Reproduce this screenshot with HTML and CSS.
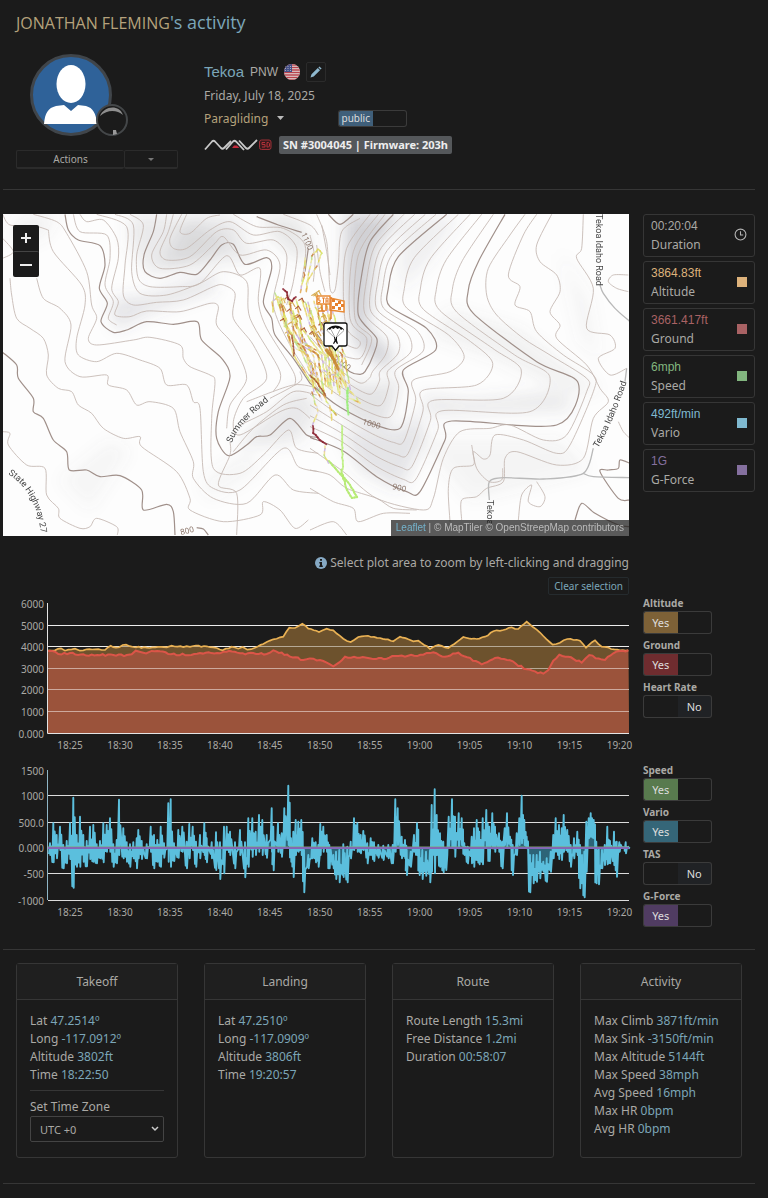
FILE: index.html
```
<!DOCTYPE html>
<html lang="en">
<head>
  <meta charset="UTF-8" />
  <meta name="viewport" content="width=device-width, initial-scale=1.0" />
  <title>Activity</title>
  <link rel="stylesheet" href="styles.css">
</head>
<body>
  <h1 class="page-title"><a href="#">JONATHAN FLEMING</a>'s activity</h1>

  <div class="profile">
    <div class="profile-left">
      <div class="avatar">
        <svg viewBox="0 0 82 82" aria-hidden="true">
          <circle cx="41" cy="41" r="39.5" fill="#2f6299" stroke="#40454a" stroke-width="3" />
          <ellipse cx="41" cy="30" rx="14.5" ry="19" fill="#fff" />
          <path d="M14 70c1-11 4-16 12-18l8-1 7 6 7-6 8 1c7 2 10 7 11 18z" fill="#fff" />
        </svg>
        <svg class="avatar-badge" viewBox="0 0 32 32" aria-hidden="true">
          <circle cx="16" cy="16" r="15" fill="#1b1b1b" stroke="#444749" stroke-width="2" />
          <path d="M4 12C8 2 23 0 27 11c-6-5-15-6-23 1z" fill="#8e8e8e" />
          <path d="M17 26l3 0 1 4-4 1z" fill="#999" />
        </svg>
      </div>
      <div class="actions">
        <button type="button" class="actions-main">Actions</button>
        <button type="button" class="actions-more" aria-label="More actions"><span class="caret"></span></button>
      </div>
    </div>

    <div class="profile-info">
      <div class="site-row">
        <a href="#" class="site-name">Tekoa</a>
        <span class="site-region">PNW</span>
        <svg class="flag" viewBox="0 0 16 16" aria-label="United States">
          <clipPath id="round"><circle cx="8" cy="8" r="8" /></clipPath>
          <g clip-path="url(#round)">
            <path fill="#e4dcdc" d="M0 0h16v16H0z" />
            <path stroke="#b8434c" stroke-width="1.3" d="M0 1h16M0 3.5h16M0 6h16M0 8.5h16M0 11h16M0 13.5h16M0 16h16" />
            <path fill="#434f86" d="M0 0h8v8H0z" />
            <path stroke="#aab" stroke-width="1" stroke-dasharray="1 1.5" d="M1 2.5h7M1 4.5h7M1 6.5h7" />
          </g>
        </svg>
        <button type="button" class="edit-btn" aria-label="Edit site">
          <svg viewBox="0 0 12 12" aria-hidden="true"><path d="M.5 11.5l1-3.2 6.3-6.3 2.2 2.2-6.3 6.3zM8.400 1.400l1-1 2.200 2.200-1 1z" fill="#8fb9cf" /></svg>
        </button>
      </div>
      <div class="date-row">Friday, July 18, 2025</div>
      <div class="sport-row">
        <select class="sport" aria-label="Sport"><option>Paragliding</option></select>
        <label class="switch switch-public">
          <input type="checkbox" aria-label="Visibility" checked>
          <span>public</span><span></span>
        </label>
      </div>
      <div class="device-row">
        <svg class="device-logo" viewBox="0 0 68 12" aria-label="NAV SD">
          <path d="M1 10.500 8 2.500q1.500-1.500 3 0l6 6.500q1.500 1.500 3 0L27 2M22 10.500l7-8q1.500-1.500 3 0l8 8.500M35 1.500l7 7.500q1.500 1.500 3 0l8-8" fill="none" stroke="#c9c9c9" stroke-width="1.800" />
          <path d="M28 9l2-2.500h3L35.500 9z" fill="#c22a3c" />
          <rect x="55.500" y="1" width="11.500" height="9.500" rx="2" fill="#3a1a1c" stroke="#9c3037" />
          <path d="M61 3.500h-3v2h3v2.500h-3M63 3.500h1.500l1 1v2.500l-1 1H63z" fill="none" stroke="#b33038" />
        </svg>
        <span class="serial">SN #3004045 | Firmware: 203h</span>
      </div>
    </div>
  </div>

  <hr>

  <div class="flight">
    <div class="map">
      <svg id="map" viewBox="3 214 626 322" role="img" aria-label="Flight map">
        <defs>
          <filter id="soft" x="-30%" y="-30%" width="160%" height="160%"><feGaussianBlur stdDeviation="8" /></filter>
        </defs>
        <rect x="3" y="214" width="626" height="322" fill="#fdfdfd" />
        <g id="relief" filter="url(#soft)"></g>
        <g id="contoursWest" transform="translate(0 205) scale(.33333)"></g>
        <g id="contoursEast" transform="translate(310 205) scale(.33333)"></g>
        <g class="elevations">
          <text transform="translate(301 234) rotate(66)">1100</text>
          <text transform="translate(334 359) rotate(40)">1100</text>
          <text transform="translate(362 424) rotate(16)">1000</text>
          <text transform="translate(392 489) rotate(12)">900</text>
          <text transform="translate(181 535) rotate(-14)">800</text>
        </g>
        <path id="roadSummer" d="M232 443Q238 424 270 400" fill="none" />
        <path id="roadHighway" d="M8 474Q36 491 41 534" fill="none" />
        <path id="roadTekoa" d="M598 448Q612 425 627 381" fill="none" />
        <g class="roads">
          <text><textPath href="#roadSummer">Summer Road</textPath></text>
          <text><textPath href="#roadHighway">State Highway 27</textPath></text>
          <text><textPath href="#roadTekoa">Tekoa Idaho Road</textPath></text>
          <text transform="translate(596 214) rotate(90)">Tekoa Idaho Road</text>
          <text transform="translate(487 500) rotate(90)">Tekoa</text>
        </g>
        <g id="track"></g>
        <g class="marks">
          <path d="M317 296h13v8h-13zM330 298l14 3v11l-14-2z" fill="#fff" stroke="#e98a35" stroke-width="1.500" />
          <path d="M331 297v22M318 311h7M322 305v6M326 304v7" stroke="#e67f2b" stroke-width="1.500" />
          <path d="M320 298h-2v2h2v2.500h-2M322 298h3M323.500 298v5M326 303v-5h2v5M326 301h2" fill="none" stroke="#e67f2b" />
          <path d="M332 299h3v3h-3zM338 301h3v3h-3zM335 303h3v3h-3zM332 306h3v3h-3zM338 307h3v3h-3zM341 304h3v3h-3z" fill="#e67f2b" />
          <path d="M326 323h19q2 0 2 2v19q0 2-2 2h-6l-3.500 4.500L332 346h-6q-2 0-2-2v-19q0-2 2-2z" fill="#fff" stroke="#111" stroke-width="1.300" />
          <path d="M326.500 331q1.500-5 9-5.500 7.500 .5 9 5.500l-2-2-1.500 1-1.500-2-2 1-2-1.500-2 1.500-2-1-1.500 2-1.500-1z" fill="#111" />
          <path d="M327 330.500l8 7.500M331 329.500l4 8M340 329.500l-4 8M344 330.500l-8 7.500" stroke="#555" stroke-width=".5" />
          <path d="M334 337h1v1.500h1V337h1v3.500l1 3-1 .5-1.500-2.500L334 344l-1-.5 1.500-3z" fill="#111" />
        </g>
      </svg>
      <div class="map-zoom">
        <button type="button" aria-label="Zoom in"><svg viewBox="0 0 12 12"><path d="M6 1v10M1 6h10" /></svg></button>
        <button type="button" aria-label="Zoom out"><svg viewBox="0 0 12 12"><path d="M0 6h12" /></svg></button>
      </div>
      <div class="map-credit"><a href="#">Leaflet</a> | © MapTiler © OpenStreepMap contributors</div>
    </div>

    <div class="readouts">
      <div class="readout duration">
        <div><b>00:20:04</b><span>Duration</span></div>
        <svg viewBox="0 0 12 12" aria-hidden="true"><circle cx="6" cy="6" r="5" /><path d="M6 3v3.500h2.500" /></svg>
      </div>
      <div class="readout altitude"><div><b>3864.83ft</b><span>Altitude</span></div><i></i></div>
      <div class="readout ground"><div><b>3661.417ft</b><span>Ground</span></div><i></i></div>
      <div class="readout speed"><div><b>6mph</b><span>Speed</span></div><i></i></div>
      <div class="readout vario"><div><b>492ft/min</b><span>Vario</span></div><i></i></div>
      <div class="readout gforce"><div><b>1G</b><span>G-Force</span></div><i></i></div>
    </div>

    <div class="plot-hint">
      <p>
        <svg viewBox="0 0 12 12" aria-hidden="true"><circle cx="6" cy="6" r="6" fill="#86a9c4" /><path d="M5 2h2v1.800H5zM4.300 5H7v3.500h.8V10H4.300V8.500H5V6.400h-.7z" fill="#1b1b1b" /></svg>
        Select plot area to zoom by left-clicking and dragging
      </p>
      <button type="button" class="clear-btn">Clear selection</button>
    </div>

    <svg id="heightChart" class="chart" viewBox="3 595 626 162" role="img" aria-label="Altitude and ground"></svg>
    <div class="switches">
      <label class="switch altitude">Altitude<input type="checkbox" checked><span>Yes</span><span></span></label>
      <label class="switch ground">Ground<input type="checkbox" checked><span>Yes</span><span></span></label>
      <label class="switch">Heart Rate<input type="checkbox"><span></span><span>No</span></label>
    </div>

    <svg id="varioChart" class="chart" viewBox="3 762 626 162" role="img" aria-label="Speed and vario"></svg>
    <div class="switches">
      <label class="switch speed">Speed<input type="checkbox" checked><span>Yes</span><span></span></label>
      <label class="switch vario">Vario<input type="checkbox" checked><span>Yes</span><span></span></label>
      <label class="switch">TAS<input type="checkbox"><span></span><span>No</span></label>
      <label class="switch gforce">G-Force<input type="checkbox" checked><span>Yes</span><span></span></label>
    </div>
  </div>

  <hr>

  <div class="cards">
    <div class="card">
      <h2>Takeoff</h2>
      <div class="card-body">
        <ul>
          <li>Lat <b>47.2514º</b></li>
          <li>Long <b>-117.0912º</b></li>
          <li>Altitude <b>3802ft</b></li>
          <li>Time <b>18:22:50</b></li>
        </ul>
        <div class="timezone">
          <label for="timezone">Set Time Zone</label>
          <select id="timezone"><option>UTC +0</option></select>
        </div>
      </div>
    </div>
    <div class="card">
      <h2>Landing</h2>
      <div class="card-body">
        <ul>
          <li>Lat <b>47.2510º</b></li>
          <li>Long <b>-117.0909º</b></li>
          <li>Altitude <b>3806ft</b></li>
          <li>Time <b>19:20:57</b></li>
        </ul>
      </div>
    </div>
    <div class="card">
      <h2>Route</h2>
      <div class="card-body">
        <ul>
          <li>Route Length <b>15.3mi</b></li>
          <li>Free Distance <b>1.2mi</b></li>
          <li>Duration <b>00:58:07</b></li>
        </ul>
      </div>
    </div>
    <div class="card">
      <h2>Activity</h2>
      <div class="card-body">
        <ul>
          <li>Max Climb <b>3871ft/min</b></li>
          <li>Max Sink <b>-3150ft/min</b></li>
          <li>Max Altitude <b>5144ft</b></li>
          <li>Max Speed <b>38mph</b></li>
          <li>Avg Speed <b>16mph</b></li>
          <li>Max HR <b>0bpm</b></li>
          <li>Avg HR <b>0bpm</b></li>
        </ul>
      </div>
    </div>
  </div>

  <hr>

  <script src="script.js"></script>
</body>
</html>
```
FILE: styles.css
```
* {
  box-sizing: border-box;
}

body {
  margin: 0;
  padding: 9px 13px 14px 3px;
  background: #1b1b1b;
  color: #aaa9a5;
  font-family: "Noto Sans", sans-serif;
  font-size: 12px;
  line-height: 18px;
}

a {
  color: #7ba6b8;
  text-decoration: none;
}

button, select {
  font-family: inherit;
  font-size: 10px;
  color: inherit;
  background: transparent;
  border: 1px solid #2b2b2b;
  border-radius: 2px;
  padding: 0;
  cursor: pointer;
}

hr {
  margin: 0;
  border: 0;
  border-top: 1px solid #363636;
}

.page-title {
  margin: 0 13px 18px;
  font-family: "Open Sans", sans-serif;
  font-size: 18px;
  font-weight: 400;
  line-height: 26px;
  color: #7ba6b8;
}

.page-title a {
  font-size: 16px;
  color: #b5a27c;
}

/* profile header */
.profile {
  display: grid;
  grid-template-columns: 162px 1fr;
  gap: 26px;
  padding: 0 13px;
  margin-bottom: 20px;
}

.avatar {
  position: relative;
  width: 82px;
  height: 82px;
  margin: 0 14px 14px;
}

.avatar svg {
  display: block;
  width: 100%;
}

.avatar .avatar-badge {
  position: absolute;
  right: -16px;
  bottom: 0;
  width: 32px;
}

.actions {
  display: flex;
  height: 19px;
}

.actions button {
  border-bottom: 2px solid #2b2b2b;
}

.actions .actions-main {
  flex: 1;
  border-right: 0;
}

.actions .actions-more {
  display: flex;
  align-items: center;
  justify-content: center;
  width: 54px;
  color: #777;
}

.caret {
  border: 3px solid transparent;
  border-top-color: currentColor;
  border-bottom: 0;
}

.profile-info {
  padding-top: 8px;
}

.profile-info > div {
  display: flex;
  align-items: center;
}

.site-row {
  gap: 6px;
  height: 20px;
  font-family: "Liberation Sans", sans-serif;
}

.site-name {
  font-size: 15px;
}

.flag {
  width: 16px;
  height: 16px;
}

.edit-btn {
  display: flex;
  align-items: center;
  justify-content: center;
  width: 20px;
  height: 20px;
}

.edit-btn svg {
  width: 12px;
}

.date-row {
  margin-top: 5px;
}

.sport-row {
  gap: 50px;
  margin-top: 4px;
}

.sport {
  appearance: none;
  width: 84px;
  height: 18px;
  border: 0;
  font-size: 12px;
  color: #b5a27c;
  background: url('data:image/svg+xml,<svg xmlns="http://www.w3.org/2000/svg" width="7" height="4"><path d="M0 0h7L3.500 4z" fill="%23bbb"/></svg>') no-repeat right 4px center;
}

.device-row {
  gap: 7px;
  margin-top: 9px;
}

.device-logo {
  width: 68px;
  height: 12px;
}

.serial {
  padding: 0 4px;
  border-radius: 2px;
  background: #55585b;
  color: #eee;
  font-size: 11px;
  font-weight: 700;
}

/* yes / no switches */
.switches {
  display: flex;
  flex-direction: column;
  gap: 3px;
}

.switch {
  position: relative;
  display: grid;
  grid-template-columns: repeat(2, minmax(0, 1fr));
  grid-template-rows: 16px 23px;
  width: 69px;
  font-size: 10px;
  font-weight: 700;
  line-height: 16px;
  white-space: nowrap;
  cursor: pointer;
}

.switch input {
  position: absolute;
  opacity: 0;
}

.switch span {
  grid-row: 2;
  height: 23px;
  border: 1px solid #3b3b3b;
  font-size: 11px;
  font-weight: 400;
  line-height: 21px;
  text-align: center;
  color: #ddd;
}

.switch span:nth-of-type(1) {
  border-right: 0;
  border-radius: 3px 0 0 3px;
}

.switch span:nth-of-type(2) {
  border-left: 0;
  border-radius: 0 3px 3px 0;
}

.switch input:not(:checked) ~ span:nth-of-type(2) {
  background: #202225;
}

.switch.altitude input:checked + span { background: #7d6137; }
.switch.ground input:checked + span { background: #6f2c2f; }
.switch.speed input:checked + span { background: #587a4e; }
.switch.vario input:checked + span { background: #356678; }
.switch.gforce input:checked + span { background: #503c62; }
.switch-public input:checked + span { background: #3f5f7a; }

.switch-public {
  grid-template-rows: 17px;
}

.switch-public span {
  grid-row: 1;
  height: 17px;
  font-size: 10px;
  line-height: 15px;
}

/* map, readouts and charts */
.flight {
  display: grid;
  grid-template-columns: 1fr 112px;
  column-gap: 14px;
  padding: 24px 0 22px;
}

.map {
  position: relative;
  overflow: hidden;
}

.map > svg {
  display: block;
  width: 100%;
}

.elevations {
  font-size: 8px;
  fill: #8a7468;
}

.roads {
  font-family: Roboto, sans-serif;
  font-size: 9px;
  fill: #444;
}

.map-zoom {
  position: absolute;
  top: 11px;
  left: 10px;
  width: 26px;
  border-radius: 2px;
  background: #1b1b1b;
}

.map-zoom button {
  display: flex;
  align-items: center;
  justify-content: center;
  width: 26px;
  height: 26px;
  border: 0;
}

.map-zoom button + button {
  border-top: 1px solid #444;
}

.map-zoom svg {
  width: 12px;
  stroke: #eee;
  stroke-width: 2;
}

.map-credit {
  position: absolute;
  right: 0;
  bottom: 0;
  padding: 0 5px;
  background: rgba(27, 27, 27, 0.72);
  color: #bbb;
  font-family: "Liberation Sans", sans-serif;
  font-size: 10px;
  line-height: 16px;
}

.map-credit a {
  color: #74b3cc;
}

.readouts {
  display: flex;
  flex-direction: column;
  gap: 4px;
}

.readout {
  display: flex;
  align-items: center;
  justify-content: space-between;
  height: 43px;
  padding: 0 7px 2px;
  border: 1px solid #363636;
  border-radius: 3px;
}

.readout b {
  display: block;
  font-family: "Liberation Sans", sans-serif;
  font-weight: 400;
  line-height: 20px;
}

.readout i {
  width: 10px;
  height: 10px;
  background: currentColor;
}

.readout svg {
  width: 13px;
  fill: none;
  stroke: #b5b5b5;
}

.readout span {
  color: #aaa9a5;
}

.readout.altitude { color: #ddb27b; }
.readout.ground { color: #a96264; }
.readout.speed { color: #82b67f; }
.readout.vario { color: #7fb9d0; }
.readout.gforce { color: #85709f; }

.plot-hint {
  grid-column: 1;
  display: flex;
  flex-direction: column;
  align-items: flex-end;
  gap: 5px;
  padding-top: 18px;
}

.plot-hint p {
  display: flex;
  align-items: center;
  gap: 3px;
  margin: 0;
}

.plot-hint svg {
  width: 12px;
}

.clear-btn {
  height: 18px;
  padding: 0 5px;
  color: #7ba6b8;
  border-color: #252b2e;
}

.chart {
  grid-column: 1;
  display: block;
  width: 100%;
  overflow: visible;
  margin-bottom: 5px;
}

.chart + .switches + .chart {
  margin-bottom: 0;
}

.chart text {
  font-size: 10px;
  fill: #aaa9a5;
}

/* summary cards */
.cards {
  display: grid;
  grid-template-columns: repeat(4, 1fr);
  gap: 26px;
  padding: 13px 13px 25px;
}

.card {
  min-height: 195px;
  border: 1px solid #363636;
  border-radius: 3px;
}

.card h2 {
  margin: 0;
  font-size: 12px;
  font-weight: 400;
  line-height: 35px;
  text-align: center;
  background: #1f1f1f;
  border-bottom: 1px solid #363636;
}

.card-body {
  padding: 12px 13px 15px;
}

.card ul {
  margin: 0;
  padding: 0;
  list-style: none;
}

.card b {
  font-weight: 400;
  color: #7ba6b8;
}

.timezone {
  display: flex;
  flex-direction: column;
  margin-top: 6px;
  padding-top: 7px;
  border-top: 1px solid #363636;
}

.timezone select {
  appearance: none;
  height: 26px;
  padding: 0 9px;
  border-color: #444;
  font-size: 11px;
  background: url('data:image/svg+xml,<svg xmlns="http://www.w3.org/2000/svg" width="8" height="6"><path d="M1 1l3 3 3-3" fill="none" stroke="%23ccc" stroke-width="1.500"/></svg>') no-repeat right 4px center;
}
```
FILE: script.js
```
const SVG = 'http://www.w3.org/2000/svg';

function add(parent, name, attrs, text) {
  const el = document.createElementNS(SVG, name);
  for (const key in attrs) el.setAttribute(key, attrs[key]);
  if (text) el.textContent = text;
  parent.appendChild(el);
  return el;
}

function parse(str) {
  return str.trim().split(/\s+/).map(p => p.split(',').map(Number));
}

// same noise on every load
let seed = 7;
function rand() {
  seed = (seed * 16807) % 2147483647;
  return seed / 2147483647;
}

// Catmull-Rom through the points
function smooth(pts) {
  let d = `M${pts[0]}`;
  for (let i = 0; i < pts.length - 1; i++) {
    const a = pts[i - 1] || pts[i], b = pts[i], c = pts[i + 1], e = pts[i + 2] || c;
    d += `C${b[0] + (c[0] - a[0]) / 7},${b[1] + (c[1] - a[1]) / 7} ${c[0] - (e[0] - b[0]) / 7},${c[1] - (e[1] - b[1]) / 7} ${c}`;
  }
  return d;
}

function between(a, b, t) {
  return a.map((p, i) => [p[0] + (b[i][0] - p[0]) * t, p[1] + (b[i][1] - p[1]) * t]);
}

/* ---------- map ---------- */
const relief = document.getElementById('relief');
// polygon, opacity
[
  ['130,214 170,214 260,250 250,262 190,262 150,275 130,245', 0.12],
  ['110,300 150,295 215,272 215,290 150,312 115,330', 0.15],
  ['190,214 230,214 250,235 225,245 200,265 160,268', 0.12],
  ['260,214 300,216 312,250 300,262 270,235', 0.14],
  ['345,214 400,214 375,250 368,330 395,355 385,370 355,345 345,290', 0.28],
  ['335,380 380,385 400,375 395,400 385,430 350,420', 0.16],
  ['340,430 400,430 420,410 425,440 400,490 360,470', 0.15],
  ['420,395 470,400 560,392 575,410 500,412 430,415', 0.13],
  ['235,445 300,385 320,410 300,440 270,445', 0.13],
  ['450,310 520,330 600,390 570,395 500,360 430,335', 0.08],
  ['400,216 460,216 430,260 400,290 400,250', 0.09],
  ['5,240 20,216 60,214 40,240', 0.08],
  ['60,480 110,440 130,450 90,510', 0.05],
  ['560,250 590,300 600,360 580,340', 0.05],
  ['420,440 560,440 590,470 470,500', 0.06],
  ['200,480 250,450 260,470 210,500', 0.05]
].forEach(([points, opacity]) => add(relief, 'polygon', { points, fill: '#60606c', opacity }));

function contour(group, pts, kind) {
  const style = {
    index: ['#a0908a', 3.6],
    thin: ['#c4b7b1', 2.6],
    road: ['#b9b9b9', 4]
  }[kind];
  add(group, 'path', { d: smooth(pts), fill: 'none', stroke: style[0], 'stroke-width': style[1] });
}

const west = document.getElementById('contoursWest');
[
  '195,28 205,75 235,105 300,122 315,180 298,250 322,295 303,350 340,382 380,375 440,350 520,358 592,350 605,405 665,460 690,515 655,620 650,700 685,752 740,720 770,695 810,690 870,640 920,690 955,697',
  '470,28 460,80 432,150 435,200 480,220 540,202 590,208 630,165 665,120 700,118 735,178 800,158 815,190 790,290 815,340 825,390 880,460 930,535',
  '770,35 835,60 905,82',
  '925,130 915,200',
  '8,442 50,480 55,520 100,580 100,620 130,640 160,705 200,740 208,795 260,795 300,815 360,812 425,855 430,915 500,898 520,920 525,990',
  '590,968 610,972 625,990'
].forEach(p => contour(west, parse(p), 'index'));
[
  '8,28 30,60 100,62 145,75', '8,100 40,140 8,160',
  '30,220 35,270 50,340 90,370 130,400 145,450 140,510 175,550 215,560 235,600 275,625 310,670 370,700 420,695 425,725 530,800 570,880 570,915 670,950 780,930 790,890 840,915 885,970 925,945',
  '110,220 130,280 180,310 213,360 195,470 240,515 320,510 325,540 380,555 410,600 450,590 520,610 540,680 580,770 580,820 640,880 740,895 825,810 880,855 955,865',
  '145,75 160,140 245,240 255,300 230,400 235,450 290,470 350,445 420,465 480,490 500,540 560,540 580,590 600,610 610,800 640,850 720,855 850,730 895,785 955,800',
  '100,28 170,50 200,85 260,200 275,300 290,340 265,400 290,420 400,405 450,397 540,420 550,460 570,485 630,510 645,530 635,640 640,790 720,805 790,750 865,675 890,730 955,745',
  '240,28 260,50 310,45 350,100 355,160 335,250 355,290 345,330 390,335 440,318 540,320 630,295 655,305 650,360 700,420 740,520 690,600 680,670',
  '220,28 240,80 320,90 330,160 315,240 340,290 325,340 350,360',
  '290,28 380,65 375,180 370,270 400,300 470,292 550,285 640,245 670,240 705,265 700,340 760,420 800,520 730,580 700,650 720,690 840,620 890,610 930,640',
  '345,28 400,60 395,200 420,265 500,270 600,235 670,200 740,230 750,340 840,500 820,560',
  '390,28 430,60 410,150 415,220 450,245 540,245 600,235 680,152 720,210 780,190 775,290 800,370 880,500 885,540',
  '500,28 490,80 455,150 480,190 570,180 640,120 670,95 720,150 800,135 840,180 820,300 870,420 960,560',
  '520,28 505,80 480,140 500,165 570,155 650,80 700,75 740,115 820,105 860,150 850,240',
  '545,28 510,100 520,130 560,130 630,75 690,50 760,90 840,80 890,130 880,230 860,300',
  '560,28 540,80 570,85 620,40 660,30', '700,28 770,65 850,70 915,120 905,230', '850,28 930,60 955,90',
  '700,740 760,670 850,600 920,580', '720,660 800,620 880,560 950,570', '740,590 880,540 955,550',
  '8,680 30,685 25,720 80,780 135,790 140,870 175,910 180,940 240,970 270,965 290,940 350,965 352,990'
].forEach(p => contour(west, parse(p), 'thin'));
['810,580 900,530 900,500', '690,710 690,750 655,840 710,865 710,990'].forEach(p => contour(west, parse(p), 'thin'));

const east = document.getElementById('contoursEast');
const ridge = parse('250,28 180,110 155,210 145,330 200,400 190,450 165,500 150,508 120,500 60,450 30,400 0,360');
const slope = parse('410,28 265,155 235,250 240,305 350,370 377,435 280,495 295,560 270,670 185,655 80,600 0,535');
const slopeOuter = parse('410,28 265,155 235,250 240,305 350,370 377,435 340,460 280,495 295,560 270,670 240,675 185,655 80,600 0,535');
const shelf = parse('585,28 505,170 475,255 490,325 680,470 805,535 740,660 425,648 405,705 330,860 290,860 200,815 100,738 0,697');
[ridge, slope, shelf].forEach(p => contour(east, p, 'index'));
[0.2, 0.4, 0.6, 0.8].forEach(t => {
  contour(east, between(ridge, slope, t), 'thin');
  contour(east, between(slopeOuter, shelf, t), 'thin');
});
[
  '55,28 90,58 130,28',
  '960,885 925,880 870,800 895,795 925,790 930,765 960,775',
  '795,945 815,895 855,925 925,960 960,965'
].forEach(p => contour(east, parse(p), 'index'));
[
  '150,40 95,80 85,180 75,255 60,250 50,110 20,28',
  '180,28 110,130 100,260 110,370 150,410 140,430 110,420',
  '205,28 130,140 120,340 170,400 150,460 90,450',
  '225,28 145,150 135,340 185,400 155,480',
  '20,120 30,200 45,260', '0,90 15,160 10,230', '35,60 50,140 60,210',
  '645,28 600,90 535,190 530,270 560,330 640,400 720,450 830,520 830,560 770,690 700,705 600,660 540,670 450,680 400,760 370,880 340,915 200,880 100,800 0,730',
  '680,28 640,90 595,210 630,245 615,300 660,320 680,380 760,450 850,510 850,560 780,720 740,745 640,705 555,690 540,750 520,762 490,740 490,780 430,790 415,850 420,950',
  '725,28 680,120 690,170 740,210 750,260 720,320 750,360 740,400 830,480 870,550 895,590 850,640 820,760 740,780 620,740 585,760 580,830 530,850 500,875 455,885 455,945',
  '820,28 815,130 800,160 850,250 830,370 900,390 915,430 865,460 900,510 950,490',
  '625,945 635,870 665,840 655,890 690,905 705,875 680,830',
  '955,260 920,250 895,230 910,210 955,210', '925,650 940,680 960,700',
  '0,795 60,810 110,850 200,880 250,910 320,915', '0,850 70,890 130,910 145,950 220,925 300,925', '0,975 70,950 110,990'
].forEach(p => contour(east, parse(p), 'thin'));
[
  '870,240 880,265 915,310 960,350',
  '538,885 538,830 580,818 700,822 820,805 850,730',
  '950,490 945,530', '820,805 850,815 960,818'
].forEach(p => contour(east, parse(p), 'road'));
contour(east, parse('485,720 500,790 538,830 575,825 578,790'), 'thin');

const track = document.getElementById('track');
const palette = ['#e6e06a', '#ded655', '#e9e695', '#b9e08a', '#c9b0e0', '#e0a84e', '#ecd98a', '#c77b3c', '#d4e870', '#ead36a', '#e3dff0', '#eee9a8'];
function strand(pts, color, width) {
  for (let i = 0; i < pts.length - 1; i++) {
    const [x1, y1] = pts[i], [x2, y2] = pts[i + 1];
    const steps = Math.max(1, Math.round(Math.hypot(x2 - x1, y2 - y1) / 3));
    let x = x1, y = y1;
    for (let s = 1; s <= steps; s++) {
      const nx = x1 + (x2 - x1) * s / steps + rand() - 0.5;
      const ny = y1 + (y2 - y1) * s / steps + rand() - 0.5;
      add(track, 'path', {
        d: `M${x},${y}L${nx},${ny}`, 'stroke-width': width || 1.5, 'stroke-linecap': 'round', opacity: 0.85,
        stroke: color || palette[Math.floor(rand() * palette.length)]
      });
      x = nx;
      y = ny;
    }
  }
}
for (let i = 0; i < 20; i++) {
  const top = 275 + i * 3, start = 293 + rand() * 22;
  const end = 312 + i * 2;
  strand([[top, start], [top + 4 + rand() * 6, start + 30], [end - 12 + rand() * 10, 355], [end, 370 + rand() * 25]]);
}
for (let i = 0; i < 26; i++) {
  const x = 280 + rand() * 44, y = 292 + rand() * 46;
  strand([[x, y], [x + 3, y - 2], [x + 5, y + 2]], i % 3 ? '#d2a340' : '#a8522c', 1.2);
}
[
  '306,290 309,272 312,256 318,249 322,253 317,266 308,280 306,292',
  '305,258 304,278 300,292', '273,312 272,302 278,297 285,300', '280,298 293,355 310,380 322,400',
  '322,370 340,378 360,403 350,398', '315,378 328,404 336,415 330,408 332,420', '312,392 318,412 312,425',
  '325,446 324,455 329,463', '290,300 294,330 310,360 314,392', '320,322 330,350 345,385'
].forEach(p => strand(parse(p)));
strand(parse('283,289 287,292 288,299 292,301 296,297'), '#8b2330', 1.8);
strand(parse('313,426 313,433 320,440 326,444'), '#8b2330', 1.8);
strand(parse('292,335 294,356'), '#a85a30');
strand(parse('327,350 334,360 338,368'), '#c88b35', 3);
strand(parse('310,375 318,384 326,396'), '#a85a30');
strand(parse('348,388 347,402 348,415'), '#9bee7a', 2);
strand(parse('342,426 342,445 343,470'), '#bdef80', 1.8);
strand(parse('329,461 340,474 350,485 357,497 352,498 347,490 341,470'), '#b4ea70', 2);

/* ---------- charts ---------- */
function axes(chart, rows, labels, labelY) {
  rows.forEach((y, i) => {
    add(chart, 'text', { x: 44, y: y + 4, 'text-anchor': 'end' }, labels[i]);
    if (i) add(chart, 'path', { d: `M48,${y}H629`, stroke: '#dcdcdc', 'shape-rendering': 'crispEdges' });
  });
  for (let i = 0; i < 12; i++) {
    const m = 25 + i * 5;
    const time = `${18 + Math.floor(m / 60)}:${String(m % 60).padStart(2, '0')}`;
    add(chart, 'text', { x: 70 + i * 50 - i / 20, y: labelY, 'text-anchor': 'middle' }, time);
  }
}

// extra small wobble between the recorded points
function wobble(pts, amount) {
  const out = [];
  pts.forEach((p, i) => {
    out.push(p);
    const q = pts[i + 1];
    if (!q) return;
    const n = Math.floor((q[0] - p[0]) / 8);
    for (let k = 1; k < n; k++) {
      out.push([p[0] + (q[0] - p[0]) * k / n, p[1] + (q[1] - p[1]) * k / n + (rand() - 0.5) * amount]);
    }
  });
  return out;
}

function toPlot(pts, top) {
  return pts.map(p => [+(p[0] / 3).toFixed(1), +(top + p[1] / 3).toFixed(1)]);
}

const heights = document.getElementById('heightChart');
const heightRows = [603.5, 625.5, 646.5, 668.5, 689.5, 711.5, 733.5];
const altitude = toPlot(wobble(parse('145,331 165,331 183,325 195,332 225,326 240,332 260,328 285,328 315,330 332,317 348,323 378,314 400,321 440,323 500,322 515,317 550,321 580,318 620,319 650,324 668,331 695,320 715,326 728,321 742,329 765,323 790,312 820,298 850,290 868,263 885,264 907,251 925,266 957,276 980,266 1000,271 1030,296 1052,306 1075,291 1095,288 1140,294 1180,304 1200,290 1225,298 1240,304 1255,302 1290,327 1315,315 1345,324 1390,291 1430,297 1455,290 1480,274 1510,270 1535,262 1555,267 1580,245 1600,262 1630,288 1658,314 1680,308 1702,297 1740,302 1758,323 1785,301 1805,320 1852,329 1885,331'), 4), 540);
const ground = toPlot(wobble(parse('145,333 165,335 175,342 210,339 250,343 300,346 380,345 395,343 407,332 430,338 480,334 530,346 600,339 660,340 680,335 720,340 800,342 820,331 870,350 910,360 940,356 970,363 1000,379 1035,350 1080,353 1160,356 1185,348 1215,350 1270,344 1300,337 1335,350 1375,338 1445,373 1485,354 1530,361 1580,388 1630,401 1645,390 1660,362 1678,344 1705,350 1745,368 1768,345 1815,360 1840,340 1860,333 1885,331'), 7), 540);
axes(heights, heightRows, ['6000', '5000', '4000', '3000', '2000', '1000', '0.000'], 749);
add(heights, 'path', { d: `M48,733L${altitude.join('L')}L629,733Z`, fill: '#6d522d' });
add(heights, 'path', { d: `M48,733L${ground.join('L')}L629,733Z`, fill: '#9b533b' });
heightRows.slice(1).forEach(y => add(heights, 'path', { d: `M48,${y}H629`, stroke: '#fff', opacity: 0.5, 'shape-rendering': 'crispEdges' }));
add(heights, 'path', { d: `M${altitude.join('L')}`, fill: 'none', stroke: '#e9b154', 'stroke-width': 1.7 });
add(heights, 'path', { d: `M${ground.join('L')}`, fill: 'none', stroke: '#db5548', 'stroke-width': 2 });
add(heights, 'path', { d: 'M47.5,603V733.5H629', fill: 'none', stroke: '#e4e4e4' });

const vario = document.getElementById('varioChart');
axes(vario, [770.5, 795.5, 822.5, 847.5, 873.5, 900.5], ['1500', '1000', '500.0', '0.000', '-500', '-1000'], 916);
// x,high,low
const swings = parse('150,265,300 160,205,322 170,240,310 180,215,285 190,270,340 200,258,325 210,205,312 220,128,398 230,240,335 240,185,335 250,240,320 260,258,334 270,215,312 280,210,320 290,268,325 300,258,310 310,205,322 320,210,290 330,190,290 340,268,335 350,255,325 357,134,300 370,220,310 380,262,320 390,268,335 400,262,310 410,250,340 415,225,310 425,258,312 440,268,310 452,215,290 462,240,340 472,255,320 482,215,335 492,265,308 505,145,320 512,133,335 522,265,318 535,225,308 547,215,290 560,260,340 568,207,310 578,215,285 588,260,335 600,240,310 613,205,300 620,250,322 635,262,310 648,232,345 660,262,372 672,215,355 680,215,285 690,230,300 705,262,340 720,225,300 735,262,367 745,190,335 757,190,305 767,230,300 777,180,290 787,195,300 800,240,308 815,160,290 820,215,346 834,205,290 845,235,305 853,160,275 865,92,270 873,250,320 880,230,366 887,195,300 895,200,290 904,195,300 912,285,412 925,300,340 937,250,310 947,262,322 955,270,335 961,207,300 970,215,290 980,240,290 988,270,340 1000,300,340 1008,290,372 1018,285,382 1030,268,366 1042,275,382 1052,260,310 1062,190,285 1072,205,290 1082,240,295 1090,228,285 1102,265,325 1112,250,300 1122,262,318 1135,270,308 1150,272,315 1165,270,310 1178,270,325 1186,133,290 1193,160,270 1205,245,310 1215,255,310 1220,285,360 1232,290,335 1242,240,290 1251,205,300 1258,280,360 1267,285,372 1278,290,362 1290,285,382 1295,150,350 1304,103,355 1310,180,300 1320,235,335 1330,260,352 1338,280,345 1346,185,275 1356,133,275 1365,185,305 1376,175,280 1385,190,270 1393,265,300 1403,275,325 1415,245,325 1422,220,335 1430,195,315 1438,230,328 1448,190,328 1459,165,275 1468,215,318 1477,175,280 1485,215,290 1497,235,290 1507,260,340 1514,220,270 1521,175,275 1530,245,270 1538,270,360 1550,235,300 1558,190,270 1565,122,265 1573,195,270 1580,245,280 1590,300,412 1600,300,385 1610,300,380 1620,290,370 1630,320,350 1640,310,380 1652,290,350 1660,240,310 1667,190,290 1677,210,312 1685,220,315 1691,180,290 1702,225,290 1712,270,335 1722,250,310 1732,230,300 1740,270,400 1746,300,385 1753,290,427 1759,200,350 1766,190,250 1772,175,245 1781,195,250 1789,260,385 1796,280,388 1806,285,340 1814,270,330 1822,215,328 1830,258,325 1842,230,330 1850,260,365 1858,262,290 1870,277,279 1877,262,295 1885,275,280');
const line = [];
swings.forEach(([x, hi, lo]) => {
  const r = rand() * 0.3;
  line.push([x - 3, lo - (lo - hi) * r], [x, hi], [x + 1, lo], [x + 4, hi + (lo - hi) * (0.2 + r)]);
});
const varioLine = toPlot(line, 755);
add(vario, 'path', { d: `M50,847.5L${varioLine.join('L')}L629,847.5Z`, fill: '#2d6477' });
add(vario, 'path', { d: `M${varioLine.join('L')}`, fill: 'none', stroke: '#5bbfdd', 'stroke-width': 1.9, 'stroke-linejoin': 'round' });
add(vario, 'path', { d: 'M48,846.5H629', stroke: '#82a26f', 'stroke-width': 0.5 });
add(vario, 'path', { d: 'M48,848H629', stroke: '#8468b4', 'stroke-width': 2 });
add(vario, 'path', { d: 'M47.5,770V900', stroke: '#8fb6c6' });
```
